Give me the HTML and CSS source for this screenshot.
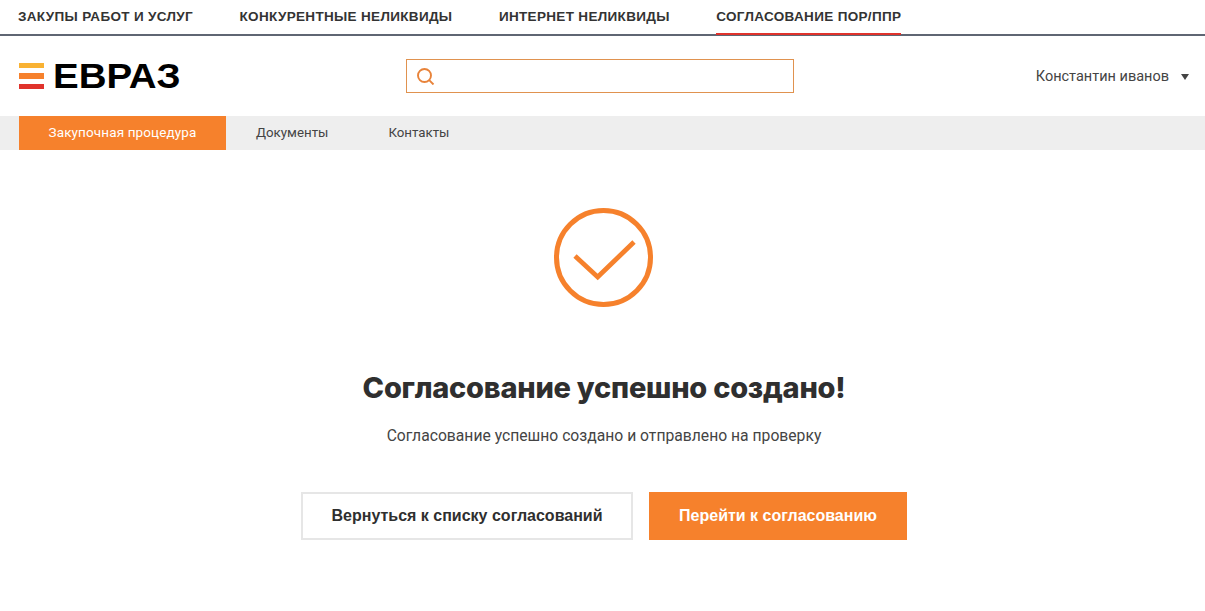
FILE: index.html
```html
<!DOCTYPE html>
<html lang="ru">
<head>
  <meta charset="UTF-8" />
  <meta name="viewport" content="width=device-width, initial-scale=1.0"/>
  <title>Согласование успешно создано</title>
  <link rel="stylesheet" href="styles.css">
</head>
<body>
  <nav class="top-nav">
    <a class="top-link">ЗАКУПЫ РАБОТ И УСЛУГ</a>
    <a class="top-link">КОНКУРЕНТНЫЕ НЕЛИКВИДЫ</a>
    <a class="top-link">ИНТЕРНЕТ НЕЛИКВИДЫ</a>
    <a class="top-link active">СОГЛАСОВАНИЕ ПОР/ППР</a>
  </nav>

  <header class="site-header">
    <div class="logo">
      <div class="logo-bars">
        <span class="bar bar-yellow"></span>
        <span class="bar bar-orange"></span>
        <span class="bar bar-red"></span>
      </div>
      <span class="logo-text">ЕВРАЗ</span>
    </div>
    <div class="search">
      <svg class="search-icon" width="18" height="18" viewBox="0 0 18 18" fill="none">
        <circle cx="7.5" cy="8.5" r="6.5" stroke="#e8833a" stroke-width="1.9"/>
        <path d="M12.2 13.2L16.5 17.5" stroke="#e8833a" stroke-width="1.9"/>
      </svg>
    </div>
    <div class="user">
      <span>Константин иванов</span>
      <span class="caret"></span>
    </div>
  </header>

  <div class="sub-nav">
    <a class="sub-link active">Закупочная процедура</a>
    <a class="sub-link">Документы</a>
    <a class="sub-link">Контакты</a>
  </div>

  <main class="result">
    <svg class="check" width="100" height="100" viewBox="0 0 100 100" fill="none">
      <circle cx="49.5" cy="49.5" r="47" stroke="#f6812c" stroke-width="5"/>
      <path d="M21 48L43.7 69L80 34" stroke="#f6812c" stroke-width="4.8"/>
    </svg>
    <h1 class="title">Согласование успешно создано!</h1>
    <p class="subtitle">Согласование успешно создано и отправлено на проверку</p>
    <div class="actions">
      <button class="btn btn-outline">Вернуться к списку согласований</button>
      <button class="btn btn-primary">Перейти к согласованию</button>
    </div>
  </main>
</body>
</html>
```

FILE: styles.css
```css
body {
  margin: 0;
  background: #fff;
  font-family: "Liberation Sans", Arial, sans-serif;
  color: #333;
}

.top-nav {
  display: flex;
  gap: 46.5px;
  height: 34px;
  padding-left: 18px;
  border-bottom: 2px solid #5f6673;
}

.top-link {
  height: 34px;
  line-height: 33px;
  font-size: 13.5px;
  font-weight: bold;
  letter-spacing: 0.33px;
  white-space: nowrap;
}

.top-link.active {
  height: 35px;
  box-sizing: border-box;
  border-bottom: 2px solid #e0332c;
}

.site-header {
  display: grid;
  grid-template-columns: 387px 388px 1fr;
  align-items: center;
  height: 80px;
  padding: 0 16px 0 19px;
}

.logo {
  display: flex;
  align-items: center;
  gap: 9px;
}

.logo-bars {
  display: flex;
  flex-direction: column;
  gap: 5px;
  width: 25px;
}

.bar {
  height: 5.4px;
}

.bar-yellow { background: #f9b233; }
.bar-orange { background: #f6812c; }
.bar-red { background: #e0332c; }

.logo-text {
  font-size: 35px;
  line-height: 36px;
  font-weight: bold;
  color: #000;
  transform: scaleX(1.1);
  transform-origin: left center;
}

.search {
  display: flex;
  align-items: center;
  box-sizing: border-box;
  height: 34px;
  padding-left: 10px;
  border: 1px solid #e0924f;
}

.user {
  display: flex;
  align-items: center;
  justify-content: flex-end;
  gap: 12px;
  font-family: Roboto, sans-serif;
  font-size: 14.5px;
  color: #444;
  margin-top: 1px;
}

.caret {
  width: 0;
  height: 0;
  border-left: 4px solid transparent;
  border-right: 4px solid transparent;
  border-top: 6px solid #444;
}

.sub-nav {
  display: flex;
  height: 34px;
  padding-left: 19px;
  background: #eee;
  font-family: Roboto, sans-serif;
  font-size: 13.3px;
  line-height: 33px;
  color: #444;
}

.sub-link {
  padding: 0 30px;
}

.sub-link.active {
  padding: 0;
  width: 207px;
  text-align: center;
  font-size: 13.5px;
  letter-spacing: 0.12px;
  background: #f6812c;
  color: #fff;
}

.result {
  display: flex;
  flex-direction: column;
  align-items: center;
  padding: 58px 0 0 3px;
}

.check {
  display: block;
}

.title {
  margin: 61px 0 0;
  font-family: Inter, sans-serif;
  font-size: 29px;
  line-height: 38px;
  font-weight: 800;
  letter-spacing: -0.25px;
  color: #2f2f2f;
}

.subtitle {
  margin: 19px 0 0;
  font-family: Roboto, sans-serif;
  font-size: 15.7px;
  line-height: 20px;
  color: #444;
}

.actions {
  display: flex;
  gap: 16px;
  margin-top: 46px;
}

.btn {
  box-sizing: border-box;
  height: 48px;
  font-family: "Liberation Sans", Arial, sans-serif;
  font-size: 16px;
  font-weight: bold;
  border-radius: 0;
  cursor: pointer;
}

.btn-outline {
  width: 332px;
  background: #fff;
  border: 2px solid #e6e6e6;
  color: #2f2f2f;
}

.btn-primary {
  width: 258px;
  background: #f6812c;
  border: 0;
  color: #fff;
}
```
